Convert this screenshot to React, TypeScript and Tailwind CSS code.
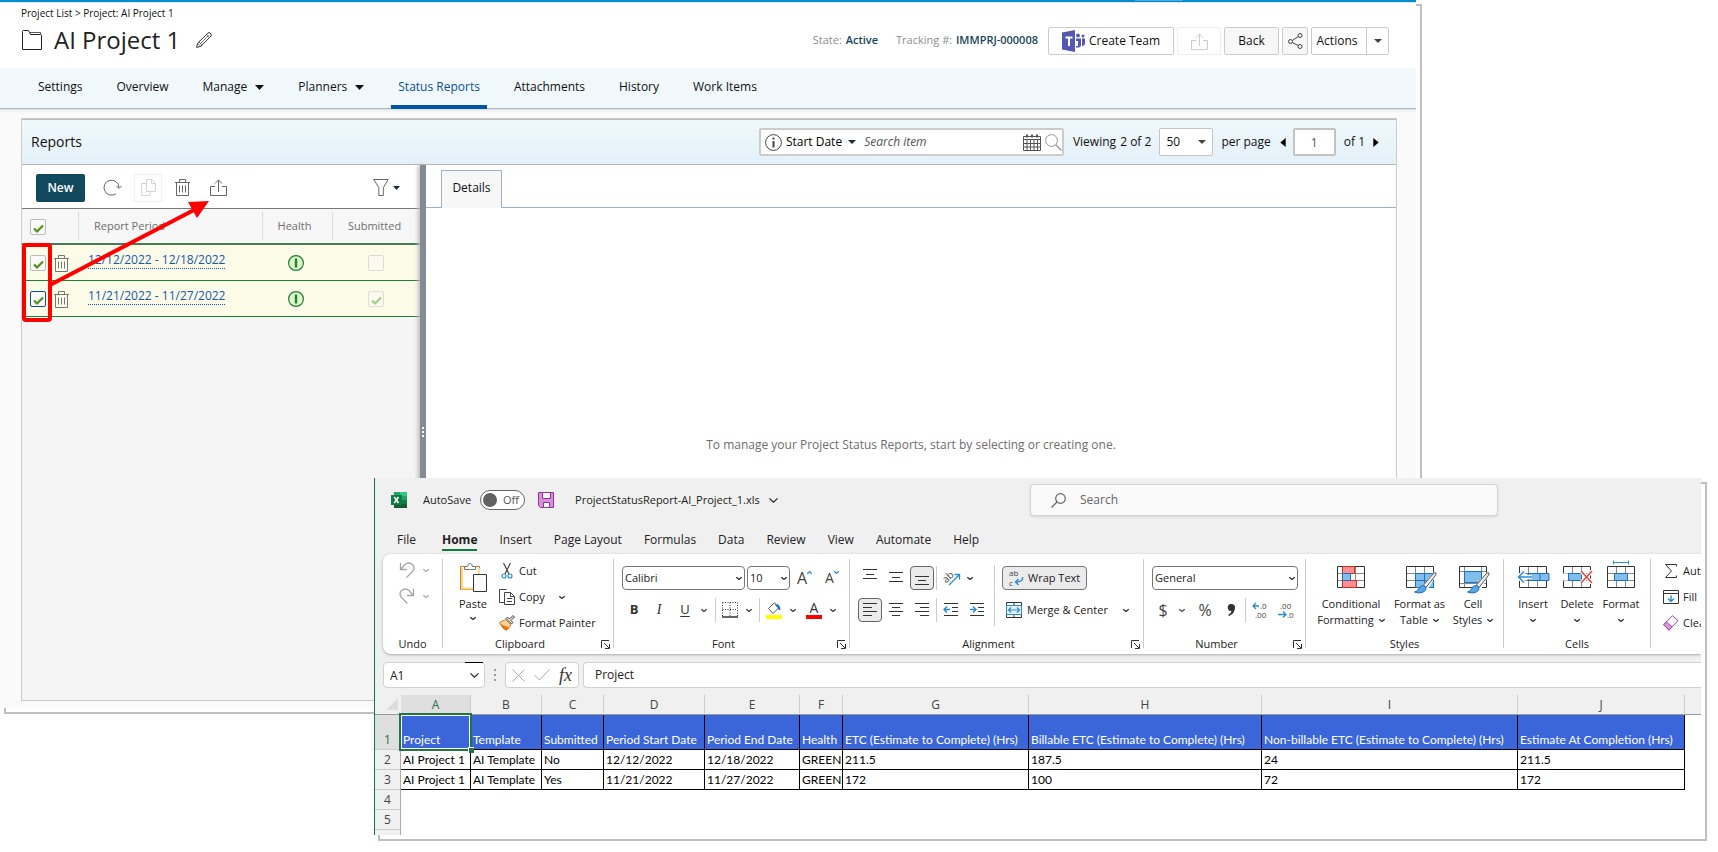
import type { ReactNode } from "react";

const NAV_ITEMS: { label: string; menu?: boolean; active?: boolean }[] = [
  { label: "Settings" },
  { label: "Overview" },
  { label: "Manage", menu: true },
  { label: "Planners", menu: true },
  { label: "Status Reports", active: true },
  { label: "Attachments" },
  { label: "History" },
  { label: "Work Items" },
];

const REPORTS = [
  { period: "12/12/2022 - 12/18/2022", submitted: false, focused: false },
  { period: "11/21/2022 - 11/27/2022", submitted: true, focused: true },
];

const RIBBON_TABS = [
  "File",
  "Home",
  "Insert",
  "Page Layout",
  "Formulas",
  "Data",
  "Review",
  "View",
  "Automate",
  "Help",
];

const SHEET_COLUMNS = [
  { letter: "A", width: "w-[70px]", title: "Project" },
  { letter: "B", width: "w-[71px]", title: "Template" },
  { letter: "C", width: "w-[62px]", title: "Submitted" },
  { letter: "D", width: "w-[101px]", title: "Period Start Date" },
  { letter: "E", width: "w-[95px]", title: "Period End Date" },
  { letter: "F", width: "w-[43px]", title: "Health" },
  { letter: "G", width: "w-[186px]", title: "ETC (Estimate to Complete) (Hrs)" },
  { letter: "H", width: "w-[233px]", title: "Billable ETC (Estimate to Complete) (Hrs)" },
  { letter: "I", width: "w-[256px]", title: "Non-billable ETC (Estimate to Complete) (Hrs)" },
  { letter: "J", width: "w-[167px]", title: "Estimate At Completion (Hrs)" },
];

const SHEET_ROWS = [
  ["AI Project 1", "AI Template", "No", "12/12/2022", "12/18/2022", "GREEN", "211.5", "187.5", "24", "211.5"],
  ["AI Project 1", "AI Template", "Yes", "11/21/2022", "11/27/2022", "GREEN", "172", "100", "72", "172"],
];

export default function App() {
  return (
    <div className="relative min-h-screen overflow-hidden bg-white">
      <ProjectWindow />
      <ExcelWindow />
    </div>
  );
}

/* ---------- project window ---------- */

function ProjectWindow() {
  return (
    <div className="relative mr-[302px] font-['Open_Sans',sans-serif] text-xs text-[#111]">
      <div className="absolute top-1 -right-[6px] -bottom-[6px] left-1 border-2 border-[#bfbfbf]" />
      <div className="relative flex min-h-[708px] flex-col bg-white">
        <div className="flex h-[3px] justify-end border-b border-[#d5eaf4] bg-[#0a8bcb]">
          <span className="mr-[233px] h-px w-12 bg-[#4aa9d8]" />
        </div>
        <ProjectHeader />
        <nav className="flex h-[41px] gap-5 border-b border-[#a3bac6] bg-[#f0f8fc] pl-[31px]">
          {NAV_ITEMS.map((item) => (
            <a
              key={item.label}
              href="#"
              className={`-mb-px flex h-[41px] items-center border-b-4 px-[7px] pt-px ${
                item.active
                  ? "border-[#0055a6] font-medium text-[#0b4f9c]"
                  : "border-transparent"
              }`}
            >
              {item.label}
              {item.menu && <Caret className="ml-2 h-[5px] w-[9px]" />}
            </a>
          ))}
        </nav>
        <main className="flex flex-1 flex-col bg-[#fafafa] pt-[9px] pr-[19px] pb-[7px] pl-[21px] shadow-[inset_0_3px_3px_-2px_#d8d8d8]">
          <div className="flex flex-1 flex-col border border-[#ccc]">
            <ReportsBar />
            <div className="flex flex-1">
              <ReportList />
              <div className="flex w-[6px] flex-col items-center gap-[2px] bg-[#838b94] pt-[262px] shadow-[-2px_0_4px_#bbb]">
                <i className="size-[2px] bg-white" />
                <i className="size-[2px] bg-white" />
                <i className="size-[2px] bg-white" />
              </div>
              <section className="flex flex-1 flex-col bg-white">
                <div className="flex h-[43px] items-end">
                  <span className="h-px w-[15px] bg-[#9db0cb]" />
                  <button className="h-[38px] w-[61px] border border-b-0 border-[#9db0cb] bg-[#f7f7f7] pb-1 font-medium text-[#111]">
                    Details
                  </button>
                  <span className="h-px flex-1 bg-[#9db0cb]" />
                </div>
                <p className="pt-[229px] text-center text-[#6e6e6e]">
                  To manage your Project Status Reports, start by selecting or creating one.
                </p>
              </section>
            </div>
          </div>
        </main>
        <Annotation />
      </div>
    </div>
  );
}

function ProjectHeader() {
  return (
    <header className="flex h-[65px] justify-between pr-[27px] pl-[21px]">
      <div>
        <p className="pt-[2px] text-[10px] leading-4">
          <a href="#">Project List</a> &gt; <a href="#">Project: AI Project 1</a>
        </p>
        <div className="mt-[3px] flex h-8 items-center pl-px">
          <svg viewBox="0 0 20 20" className="size-5" fill="none" stroke="#222">
            <path d="M.5 19.500V1.500q0-1 1-1H6.500l2 4h10q1 0 1 1V19.500z" />
            <path d="M7 2.500h11.500V4.500" stroke="#555" />
          </svg>
          <h1 className="ml-3 text-2xl leading-8 text-[#222]">AI Project 1</h1>
          <button aria-label="Rename" className="ml-4">
            <svg viewBox="0 0 16 16" className="size-4" fill="none" stroke="#333">
              <path d="M.6 15.400l1-4.200L12 1q1-.8 2 0l1 1q.8 1 0 2L4.800 14.400z" />
              <path d="M10.500 2.500l3 3M3 10l3 3M4.500 11.500l8-8M1.600 11.200l3.200 3.200" strokeWidth=".7" />
            </svg>
          </button>
        </div>
      </div>
      <div className="flex h-full items-center gap-[3px] pt-[11px] pl-3">
        <p className="mr-[7px] pb-px text-[11px] text-[#8a8f94]">
          State: <span className="ml-px font-semibold text-[#18455a]">Active</span>
          <span className="ml-[18px]">Tracking #:</span>{" "}
          <span className="ml-px font-semibold text-[#18455a]">IMMPRJ-000008</span>
        </p>
        <button className="flex h-7 w-[126px] items-center rounded-xs border border-[#ccc] pl-[13px]">
          <svg viewBox="0 0 23 22" className="mr-1 h-[22px] w-[23px]">
            <path fill="#5558af" d="M0 2.500L13 0v22L0 19.500z" />
            <path fill="#fff" d="M3.500 6.500h7v2H8v7.500H6V8.500H3.500z" />
            <g fill="#5558af">
              <circle cx="16" cy="5.500" r="1.900" />
              <circle cx="21" cy="6" r="1.500" />
              <path d="M14 8.500h5V15q0 3-5 2.500V16h2v-5h-2zM20 8.500h3V13q0 3-3 3z" />
            </g>
          </svg>
          <span>Create Team</span>
        </button>
        <button disabled aria-label="Export" className="flex h-7 w-11 items-center justify-center rounded-xs border border-[#eee] text-[#ccc]">
          <UploadIcon />
        </button>
        <button className="h-7 w-[55px] rounded-xs border border-[#ccc] bg-[#f7f7f7]">Back</button>
        <button aria-label="Share" className="flex h-7 w-[26px] items-center justify-center rounded-xs border border-[#ccc] bg-[#f7f7f7]">
          <svg viewBox="0 0 15 16" className="h-4 w-[15px]" fill="none" stroke="#444">
            <circle cx="2.500" cy="8.500" r="2" />
            <circle cx="12" cy="2.500" r="2" />
            <circle cx="12" cy="13.500" r="2" />
            <path d="M4.300 7.500L10.300 3.500M4.300 9.500l6 3" />
          </svg>
        </button>
        <div className="flex h-7 rounded-xs border border-[#ccc]">
          <button className="w-[55px] border-r border-[#ccc] pr-1">Actions</button>
          <button aria-label="More actions" className="flex w-[21px] items-center justify-center">
            <Caret className="h-1 w-2 text-[#444]" />
          </button>
        </div>
      </div>
    </header>
  );
}

function ReportsBar() {
  return (
    <div className="flex h-[46px] items-center justify-between border-y border-t-[#bbb] border-b-[#b5b5b5] bg-linear-to-b from-[#f0f8fc] to-[#e3f1f8] pr-[17px] pl-[9px]">
      <h2 className="text-sm font-medium text-[#111]">Reports</h2>
      <div className="flex items-center">
        <div className="flex h-7 w-[305px] items-center rounded-xs border-2 border-[#ccc] bg-white pl-1">
          <svg viewBox="0 0 17 17" className="size-[17px]" fill="none" stroke="#444">
            <circle cx="8.500" cy="8.500" r="7.900" />
            <path d="M8.500 7v6.500M8.500 3.500v2" strokeWidth="2" />
          </svg>
          <button className="ml-1 flex items-center font-medium text-black">
            Start Date <Caret className="ml-[6px] h-1 w-2 text-[#1c2b3a]" />
          </button>
          <input
            aria-label="Search item"
            placeholder="Search item"
            className="ml-2 w-0 flex-1 italic outline-none placeholder:text-[#555]"
          />
          <svg viewBox="0 0 18 17" className="h-[17px] w-[18px]" fill="none" stroke="#555">
            <path d="M.5 2.500h17v14H.5zM.5 5.500h17M.5 9.500h17M.5 13h17M4 5.500v11M7.500 5.500v11M11 5.500v11M14.500 5.500v11" />
            <path d="M4 .5v3M9 .5v3M14 .5v3" strokeWidth="2" />
          </svg>
          <svg viewBox="0 0 17 17" className="ml-1 size-[17px]" fill="none" stroke="#999">
            <circle cx="6.500" cy="6.500" r="5.900" />
            <path d="M10.800 10.800l5.700 5.700" strokeWidth="1.400" />
          </svg>
        </div>
        <p className="ml-[9px]">
          Viewing <span className="ml-px font-medium">2 of 2</span>
        </p>
        <div className="relative ml-2">
          <select aria-label="Reports per page" className="h-7 w-[54px] appearance-none rounded-xs border border-[#c4c4c4] bg-white pl-[6px]">
            <option>50</option>
          </select>
          <Caret className="pointer-events-none absolute top-3 right-[7px] h-1 w-2 text-[#444]" />
        </div>
        <span className="ml-2">per page</span>
        <button aria-label="Previous page" className="ml-[9px]">
          <svg viewBox="0 0 6 10" className="h-[9px] w-[6px]">
            <path d="M6 0v10L0 5z" />
          </svg>
        </button>
        <input
          aria-label="Page"
          defaultValue="1"
          className="ml-[7px] h-7 w-[43px] rounded-xs border-2 border-[#c4c4c4] bg-white text-center text-[#555]"
        />
        <span className="ml-2">of 1</span>
        <button aria-label="Next page" className="ml-2">
          <svg viewBox="0 0 6 10" className="h-[9px] w-[6px]">
            <path d="M0 0v10l6-5z" />
          </svg>
        </button>
      </div>
    </div>
  );
}

function ReportList() {
  return (
    <section className="w-[398px] bg-[#f5f5f5]">
      <div className="flex h-[44px] items-center border-b border-[#777] bg-white pt-[2px] pr-5 pl-[14px] text-[#666]">
        <button className="h-7 w-[49px] rounded-xs bg-[#11495f] font-semibold text-white">New</button>
        <button aria-label="Refresh" className="ml-[18px]">
          <svg viewBox="0 0 19 17" className="h-[17px] w-[19px]" fill="none" stroke="currentColor">
            <path d="M16 8.500a7.500 7.500 0 1 0-3.200 6.300M13.500 7l2.500 2.500L18.500 7" />
          </svg>
        </button>
        <button disabled aria-label="Copy" className="ml-3 flex size-7 items-center justify-center border border-[#eee] text-[#d5d5d5]">
          <svg viewBox="0 0 15 17" className="h-[17px] w-[15px]" fill="none" stroke="currentColor">
            <path d="M5.500.5h5l4 4v8h-9zM10.500.5v4h4M5.500 4.500h-5v12h8.500v-4" />
          </svg>
        </button>
        <button aria-label="Delete" className="ml-[13px]">
          <TrashIcon />
        </button>
        <button aria-label="Export" className="ml-5">
          <UploadIcon />
        </button>
        <button aria-label="Filter" className="ml-auto flex items-center">
          <svg viewBox="0 0 16 17" className="h-[17px] w-4" fill="none" stroke="currentColor">
            <path d="M.7.5h14.600l-5 8v8h-4.500v-8z" />
          </svg>
          <Caret className="ml-1 h-1 w-[7px] text-[#1c2b3a]" />
        </button>
      </div>
      <table className="w-full table-fixed border-separate border-spacing-0">
        <thead>
          <tr className="h-[36px] bg-[#f7f7f7] text-[11px] text-[#6e6e6e]">
            <th className="w-14 border-b-2 border-[#4a7a55] pl-2 text-left">
              <Tick label="Select all reports" checked className="mt-[2px] border-[#bbb]" />
            </th>
            <HeadCell width="w-[184px]" text="Report Period" align="pl-[15px] text-left" />
            <HeadCell width="w-[70px]" text="Health" align="pr-[6px] text-center" />
            <HeadCell width="" text="Submitted" align="pr-1 text-center" />
          </tr>
        </thead>
        <tbody>
          {REPORTS.map((report) => (
            <tr key={report.period} className="h-9 bg-[#fcfbe8]">
              <td className="border-b border-[#1c8035] p-0 pl-2">
                <div className="flex items-center gap-2 pt-px">
                  <Tick
                    label={`Select ${report.period}`}
                    checked
                    className={report.focused ? "border-[#0b4f9c]" : "border-[#bbb]"}
                  />
                  <button aria-label="Delete report" className="text-[#777]">
                    <TrashIcon />
                  </button>
                </div>
              </td>
              <td className="border-b border-[#1c8035] pl-[10px] align-top leading-4">
                <a href="#" className="mt-[7px] inline-block border-b border-dotted border-[#1257b5] text-[#1257b5]">
                  {report.period}
                </a>
              </td>
              <td className="border-b border-[#1c8035] p-0 pr-[3px]">
                <svg viewBox="0 0 16 16" className="mx-auto size-4" role="img" aria-label="Green">
                  <circle cx="8" cy="8" r="7.400" fill="#dff5c8" stroke="#1c8035" strokeWidth="1.200" />
                  <path d="M8 3.500v9" stroke="#1c8035" strokeWidth="2.400" />
                </svg>
              </td>
              <td className="border-b border-[#1c8035] pl-[36px]">
                <Tick label="Submitted" checked={report.submitted} disabled className="mt-px border-[#bbb]" />
              </td>
            </tr>
          ))}
        </tbody>
      </table>
    </section>
  );
}

function HeadCell({ width, text, align }: { width: string; text: string; align: string }) {
  return (
    <th className={`${width} border-b-2 border-[#4a7a55] p-0 font-normal`}>
      <div className={`h-7 border-l border-[#ddd] leading-7 ${align}`}>{text}</div>
    </th>
  );
}

function Tick({
  label,
  checked,
  disabled,
  className,
}: {
  label: string;
  checked?: boolean;
  disabled?: boolean;
  className: string;
}) {
  return (
    <span className={`relative block size-4 ${disabled ? "opacity-45" : ""}`}>
      <input
        type="checkbox"
        aria-label={label}
        defaultChecked={checked}
        disabled={disabled}
        className={`peer block size-4 appearance-none rounded-xs border bg-[#fafafa] ${className}`}
      />
      <svg
        viewBox="0 0 16 16"
        className="pointer-events-none absolute inset-0 hidden size-4 peer-checked:block"
        fill="none"
        stroke="#4c9212"
        strokeWidth="2.200"
      >
        <path d="M4 9.500l3 3L13 6.500" />
      </svg>
    </span>
  );
}

/* red call-out drawn over the selected rows, pointing at the export button */
function Annotation() {
  return (
    <svg viewBox="0 0 240 140" className="pointer-events-none absolute top-[190px] left-0 h-[140px] w-[240px]">
      <rect x="24" y="55" width="26" height="75" rx="2" fill="none" stroke="#f00" strokeWidth="4" />
      <path d="M50 95L194 20" stroke="#f00" strokeWidth="4" />
      <path d="M209 11l-21 1 9 16z" fill="#f00" />
    </svg>
  );
}

function Caret({ className }: { className: string }) {
  return (
    <svg viewBox="0 0 8 4" preserveAspectRatio="none" fill="currentColor" className={className}>
      <path d="M0 0h8L4 4z" />
    </svg>
  );
}

function UploadIcon() {
  return (
    <svg viewBox="0 0 17 17" className="size-[17px]" fill="none" stroke="currentColor">
      <path d="M5 7.500H.5v9h16v-9H12M8.500 13V1M5 4.500L8.500 1 12 4.500" />
    </svg>
  );
}

function TrashIcon() {
  return (
    <svg viewBox="0 0 15 17" className="h-[17px] w-[15px]" fill="none" stroke="currentColor">
      <path d="M0 3.500h15M4.500 3.500v-3h6v3M1.500 3.500v13h12v-13M4.500 6.500v7M7.500 6.500v7M10.500 6.500v7" />
    </svg>
  );
}

/* ---------- spreadsheet window ---------- */

function ExcelWindow() {
  return (
    <div className="absolute top-[478px] right-[17px] left-[374px] font-['Open_Sans',sans-serif] text-[11px] text-[#222]">
      <div className="absolute top-1 -right-[6px] -bottom-[6px] left-1 border-2 border-[#bfbfbf]" />
      <div className="relative overflow-hidden border-l border-[#107c41] bg-[#f0f0f0]">
        <TitleBar />
        <nav className="flex gap-[22px] pt-2 pb-[3px] pl-[22px] text-xs">
          {RIBBON_TABS.map((tab) => (
            <button
              key={tab}
              className={`border-b-2 leading-[19px] ${
                tab === "Home" ? "ml-1 border-[#107c41] font-bold" : "border-transparent"
              }`}
            >
              {tab}
            </button>
          ))}
        </nav>
        <Ribbon />
        <FormulaBar />
        <Sheet />
      </div>
    </div>
  );
}

function TitleBar() {
  return (
    <div className="flex h-11 items-center pl-4">
      <svg viewBox="0 0 16 16" className="size-4">
        <path fill="#21a366" d="M3 0h7v4H3z" />
        <path fill="#33c481" d="M9 0h7v4H9z" />
        <path fill="#107c41" d="M3 4h7v4H3z" />
        <path fill="#21a366" d="M9 4h7v4H9z" />
        <path fill="#185c37" d="M3 8h13v8H3z" />
        <path fill="#107c41" d="M9 8h7v4H9zM0 3h11v10H0z" />
        <path stroke="#fff" strokeWidth="1.500" d="M3.300 5l4.200 6M7.500 5l-4.200 6" />
      </svg>
      <label className="ml-4 flex items-center gap-[9px]">
        AutoSave
        <span className="flex h-5 w-[45px] items-center gap-[6px] rounded-full border border-[#666] bg-white pl-[2px] text-[#555]">
          <input type="checkbox" role="switch" className="size-[14px] appearance-none rounded-full bg-[#616161]" />
          Off
        </span>
      </label>
      <button aria-label="Save" className="ml-[13px]">
        <svg viewBox="0 0 16 16" className="size-4" fill="#d68fd9" stroke="#9a2fa0">
          <path d="M.5.5h15v15h-13l-2-2z" />
          <path fill="#fff" d="M4.500.5h8v6h-8zM5.500 10.500h6v5h-6z" />
        </svg>
      </button>
      <button className="ml-[21px] flex items-center gap-[9px]">
        ProjectStatusReport-AI_Project_1.xls
        <Chevron className="h-[5px] w-[9px]" />
      </button>
      <label className="mr-[203px] ml-auto flex h-8 w-[468px] items-center gap-[14px] rounded-sm border border-[#d5d5d5] bg-[#fafafa] pl-5 text-[#666] shadow-sm">
        <svg viewBox="0 0 15 15" className="size-[15px]" fill="none" stroke="#666" strokeWidth="1.200">
          <circle cx="9.500" cy="5.500" r="4.800" />
          <path d="M6 9L.5 14.500" />
        </svg>
        <input type="search" aria-label="Search" placeholder="Search" className="flex-1 text-xs outline-none placeholder:text-[#666]" />
      </label>
    </div>
  );
}

function Ribbon() {
  return (
    <div className="ml-2 flex h-[100px] overflow-hidden rounded-l-lg bg-white shadow-[0_1px_3px_#aaa]">
      <Group width="w-[59px]" label="Undo">
        <div className="flex flex-col gap-[10px] pt-2 pl-4 text-[#a5a5a5]">
          <button aria-label="Undo" className="flex items-center gap-2">
            <svg viewBox="0 0 16 16" className="size-4" fill="none" stroke="currentColor" strokeWidth="1.300">
              <path d="M1.500 1v6.500H8M1.800 7.200L6 2.500q4-3 7.500 0 3 3.500 0 7L7.500 15.500" />
            </svg>
            <Chevron className="h-[3px] w-[6px]" />
          </button>
          <button aria-label="Redo" className="flex items-center gap-2">
            <svg viewBox="0 0 16 16" className="size-4" fill="none" stroke="currentColor" strokeWidth="1.300">
              <path d="M14.500 1v6.500H8M14.200 7.200L10 2.500q-4-3-7.500 0-3 3.500 0 7l6 6" />
            </svg>
            <Chevron className="h-[3px] w-[6px]" />
          </button>
        </div>
      </Group>
      <Group width="w-[170px]" label="Clipboard" launcher>
        <div className="flex pl-[15px]">
          <button className="flex w-[30px] flex-col items-center pt-2">
            <svg viewBox="0 0 28 31" className="h-[31px] w-7" fill="none">
              <path d="M1.500 4.500h19v23h-19z" fill="#fff" stroke="#e07b16" />
              <path d="M3 6v20.500h17V6" stroke="#fbd990" strokeWidth="2" />
              <path d="M5.500 7.500v-3h3q.5-3 2.500-3t2.500 3h3v3z" fill="#fff" stroke="#777" />
              <path d="M14.500 12.500h13v17h-13z" fill="#fafafa" stroke="#333" />
            </svg>
            <span className="mt-[3px] leading-4">Paste</span>
            <Chevron className="mt-[5px] h-[3px] w-[6px]" />
          </button>
          <div className="ml-[11px] pt-1">
            <button className="flex h-[26px] items-center gap-1">
              <svg viewBox="0 0 16 16" className="size-4" fill="none" stroke="#444" strokeWidth="1.200">
                <path d="M4.500 0l5.500 11M11.500 0L6 11" />
                <circle cx="5" cy="13" r="2" stroke="#2a8dd4" />
                <circle cx="11" cy="13" r="2" stroke="#2a8dd4" />
              </svg>
              Cut
            </button>
            <button className="flex h-[26px] items-center gap-1">
              <svg viewBox="0 0 16 16" className="size-4" fill="none" stroke="#444">
                <path d="M5.500 13.500h-5V.5h7M5.500 3.500h6l4 4v8h-10zM11.500 3.500v4h4M8 9.500h5M8 12.500h5" />
              </svg>
              Copy
              <Chevron className="ml-[10px] h-[3px] w-[6px]" />
            </button>
            <button className="flex h-[26px] items-center gap-1 whitespace-nowrap">
              <svg viewBox="0 0 16 16" className="size-4" fill="none">
                <path d="M.5 7.500l6-3 5.500 5.500-4 5q-4 0-7.500-7.500z" fill="#fbd3a0" stroke="#e07b16" />
                <path d="M1.500 9l9 3.500-2.500 3q-4-.5-6.500-6.500z" fill="#e07b16" />
                <path d="M7 3.500l5.500 5.500 1.500-1.500-2-2L15.500 2 14 .5 10.500 4l-2-2z" fill="#ddd" stroke="#444" />
              </svg>
              Format Painter
            </button>
          </div>
        </div>
      </Group>
      <FontGroup />
      <AlignmentGroup />
      <NumberGroup />
      <Group width="w-[197px]" label="Styles">
        <div className="flex pt-3">
          <BigButton width="w-[90px]" lines={["Conditional", "Formatting"]}>
            <GridArt />
            <path d="M5.500.5h12v7h-12zM5.500 14.500h14v7h-14z" fill="#ff8f8f" stroke="#d92b1f" />
            <path d="M5.500 7.500h8v7h-8z" fill="#83bdec" stroke="#1a73c0" />
          </BigButton>
          <BigButton width="w-[47px]" lines={["Format as", "Table"]}>
            <GridArt />
            <path d="M9.500 7.500h18v14h-18z" fill="#83bdec" stroke="#1a73c0" />
            <path d="M9.500 14.500h18M18.500 7.500v14" stroke="#1a73c0" />
            <BrushArt />
          </BigButton>
          <BigButton width="w-[60px]" lines={["Cell", "Styles"]}>
            <path d="M.5 5.500h27M.5 17.500h27M5.500.5v21M22.500.5v21" stroke="#888" />
            <path d="M.5.5h27v21H.5z" stroke="#333" />
            <path d="M5.500 5.500h17v11h-17z" fill="#83bdec" stroke="#1a73c0" />
            <BrushArt />
          </BigButton>
        </div>
      </Group>
      <Group width="w-[146px]" label="Cells">
        <div className="flex pt-3 pl-[7px]">
          <BigButton width="w-11" lines={["Insert"]}>
            <GridArt />
            <path d="M9 7.500h21v7H9z" fill="#83bdec" stroke="#1a73c0" />
            <path d="M21 7.500v7" stroke="#1a73c0" />
            <path d="M13 11H0M5 5.500L-.5 11 5 16.500" stroke="#fff" strokeWidth="4" />
            <path d="M13 11H0M5 5.500L-.5 11 5 16.500" stroke="#2a8dd4" strokeWidth="1.500" />
          </BigButton>
          <BigButton width="w-11" lines={["Delete"]}>
            <GridArt />
            <path d="M-1 7.500h6v7h-6z" fill="#fff" />
            <path d="M5.500 7.500h13v7h-13z" fill="#83bdec" stroke="#1a73c0" />
            <path d="M18 5l11 12M29 5L18 17" stroke="#fff" strokeWidth="4" />
            <path d="M18 5l11 12M29 5L18 17" stroke="#e8433a" strokeWidth="1.500" />
          </BigButton>
          <BigButton width="w-11" lines={["Format"]}>
            <GridArt />
            <path d="M7.500 7.500h13v7h-13z" fill="#83bdec" stroke="#1a73c0" />
            <path d="M6.500-3.500h15M6.500-5.500v4M21.500-5.500v4" stroke="#2a8dd4" />
          </BigButton>
        </div>
      </Group>
      <div className="flex-1 overflow-hidden pt-1 pl-3 whitespace-nowrap">
        <button className="flex h-[26px] items-center gap-1">
          <svg viewBox="0 0 16 16" className="size-4 shrink-0" fill="none" stroke="#333">
            <path d="M13.500 3.500v-2h-11l6 6.500-6 6.500h11v-2" />
          </svg>
          AutoSum
        </button>
        <button className="flex h-[26px] items-center gap-1">
          <svg viewBox="0 0 16 16" className="size-4 shrink-0" fill="none" stroke="#333">
            <path d="M.5 1.500h15v13H.5zM.5 4.500h15" />
            <path d="M8 6.500v6M5 9.500l3 3 3-3" stroke="#2a8dd4" strokeWidth="1.400" />
          </svg>
          Fill
        </button>
        <button className="flex h-[26px] items-center gap-1">
          <svg viewBox="0 0 16 16" className="size-4 shrink-0" fill="#fff" stroke="#a33fae">
            <path d="M9.500.7l5.500 5-9 9.500-5.300-5.500z" />
            <path d="M3.500 7l5.500 5-3 3.200L.7 9.700z" fill="#d99ade" />
          </svg>
          Clear
        </button>
      </div>
    </div>
  );
}

function Group({
  width,
  label,
  launcher,
  children,
}: {
  width: string;
  label: string;
  launcher?: boolean;
  children: ReactNode;
}) {
  return (
    <>
      <section className={`${width} flex shrink-0 flex-col justify-between pb-[2px]`}>
        {children}
        <div className="flex items-center leading-4">
          <span className="flex-1 text-center">{label}</span>
          {launcher && (
            <button aria-label={`${label} settings`} className="mr-[3px] ml-1">
              <svg viewBox="0 0 9 9" className="size-[9px]" fill="none" stroke="#333">
                <path d="M.5 8V.5H8M3 3l5 5M8.500 4v4.500H4" />
              </svg>
            </button>
          )}
        </div>
      </section>
      <Divider className="mt-[5px] h-[89px]" />
    </>
  );
}

function FontGroup() {
  return (
    <Group width="w-[235px]" label="Font" launcher>
      <div className="flex flex-col gap-2 pt-3 pl-2">
        <div className="flex items-center">
          <Combo label="Font" value="Calibri" width="w-[123px]" />
          <Combo label="Font size" value="10" width="ml-[2px] w-[43px]" />
          <button aria-label="Increase font size" className="ml-[7px] flex w-[26px] items-start">
            <span className="text-base leading-5 text-[#444]">A</span>
            <Chevron className="mt-[3px] h-[3px] w-[5px] rotate-180 text-[#2a8dd4]" />
          </button>
          <button aria-label="Decrease font size" className="ml-[2px] flex items-start">
            <span className="text-sm leading-5 text-[#444]">A</span>
            <Chevron className="mt-[3px] h-[3px] w-[5px] text-[#2a8dd4]" />
          </button>
        </div>
        <div className="flex h-6 items-center text-[#333]">
          <button className="w-6 text-[13px] font-bold">B</button>
          <button className="w-[26px] font-['Liberation_Serif',serif] text-sm italic">I</button>
          <button className="w-[26px] text-[13px] underline underline-offset-2">U</button>
          <Chevron className="ml-[3px] h-[3px] w-[6px]" />
          <Divider className="ml-[8px] h-6" />
          <button aria-label="Borders" className="ml-[6px]">
            <svg viewBox="0 0 16 16" className="size-4" fill="none" stroke="#333">
              <path d="M.5.5h15v14M.5.5v14M8 .5v14M.5 7.500h15" strokeDasharray="1 1.500" />
              <path d="M0 15h16" strokeWidth="1.500" />
            </svg>
          </button>
          <Chevron className="ml-[8px] h-[3px] w-[6px]" />
          <Divider className="ml-[7px] h-6" />
          <button aria-label="Fill colour" className="ml-[6px]">
            <svg viewBox="0 0 16 17" className="h-[17px] w-4" fill="none">
              <path d="M8 1L2.500 6.500 7 11.500l5.500-5.500-3.500-4V.5" stroke="#555" />
              <path d="M10 3q3.500.5 3.500 5" stroke="#1a73c0" strokeWidth="1.800" />
              <path d="M0 13h16v4H0z" fill="#ff0" />
            </svg>
          </button>
          <Chevron className="ml-[8px] h-[3px] w-[6px]" />
          <button aria-label="Font colour" className="ml-[10px] flex w-4 flex-col items-center border-b-4 border-[#f00] text-sm leading-[14px]">
            A
          </button>
          <Chevron className="ml-[8px] h-[3px] w-[6px]" />
        </div>
      </div>
    </Group>
  );
}

function AlignmentGroup() {
  return (
    <Group width="w-[293px]" label="Alignment" launcher>
      <div className="flex pl-2">
        <div className="flex flex-col gap-2 pt-3">
          <div className="flex items-center gap-[2px]">
            <AlignButton label="Top align" d="M1 .5h14M4 5.500h8M1 9.500h14" />
            <AlignButton label="Middle align" d="M1 3.500h14M4 8.500h8M1 12.500h14" />
            <AlignButton label="Bottom align" d="M1 7.500h14M4 11.500h8M1 15.500h14" pressed />
            <Divider className="h-6" />
            <button aria-label="Orientation" className="mx-1">
              <svg viewBox="0 0 18 18" className="size-[18px] overflow-visible" fill="none">
                <text x="0" y="11" fontSize="10" fill="#444" transform="rotate(-42 6 9)">
                  ab
                </text>
                <path d="M6 16L16 6M11.500 5.500H16.500V10.500" stroke="#2a8dd4" strokeWidth="1.300" />
              </svg>
            </button>
            <Chevron className="h-[3px] w-[6px]" />
          </div>
          <div className="flex items-center gap-[2px]">
            <AlignButton label="Align left" d="M1 2.500h14M1 6.500h9M1 10.500h14M1 14.500h9" pressed />
            <AlignButton label="Center" d="M1 2.500h14M4 6.500h8M1 10.500h14M4 14.500h8" />
            <AlignButton label="Align right" d="M1 2.500h14M6 6.500h9M1 10.500h14M6 14.500h9" />
            <Divider className="h-6" />
            <AlignButton label="Decrease indent" d="M1 2.500h14M9 6.500h6M9 10.500h6M1 14.500h14" arrow="M7 8.500H1M4 5.500l-3 3 3 3" />
            <AlignButton label="Increase indent" d="M1 2.500h14M9 6.500h6M9 10.500h6M1 14.500h14" arrow="M1 8.500h6M4 5.500l3 3-3 3" />
          </div>
        </div>
        <Divider className="mt-[11px] ml-[5px] h-[61px]" />
        <div className="flex flex-col items-start gap-2 pt-3 pl-[7px] whitespace-nowrap">
          <button className="flex h-6 items-center gap-1 rounded-sm border border-[#777] bg-[#ebebeb] px-[6px]">
            <svg viewBox="0 0 15 20" className="h-5 w-[15px] overflow-visible" fill="none">
              <text x="0" y="8" fontSize="8" fill="#444">
                ab
              </text>
              <text x="0" y="18" fontSize="8" fill="#444">
                c
              </text>
              <path d="M13.500 9q1 5-7 5M9.500 11l-3 3 3 3" stroke="#2a8dd4" strokeWidth="1.400" />
            </svg>
            Wrap Text
          </button>
          <button className="flex h-6 items-center gap-[5px] pl-1">
            <svg viewBox="0 0 16 16" className="size-4" fill="none" stroke="#333">
              <path d="M.5.500h15v15H.500zM8 .500v3M8 12.500v3" />
              <path d="M.5 3.500h15v9H.500z" fill="#e3f1fc" stroke="#2a8dd4" />
              <path d="M2.500 8h11M5 5.500L2.500 8 5 10.500M11 5.500L13.500 8 11 10.500" stroke="#2a8dd4" strokeWidth="1.200" />
            </svg>
            Merge &amp; Center
            <Chevron className="ml-[10px] h-[3px] w-[6px]" />
          </button>
        </div>
      </div>
    </Group>
  );
}

function NumberGroup() {
  return (
    <Group width="w-[161px]" label="Number" launcher>
      <div className="flex flex-col gap-2 pt-3 pl-2">
        <Combo label="Number format" value="General" width="w-[146px]" />
        <div className="flex h-6 items-center text-[#444]">
          <button className="w-[22px] text-base">$</button>
          <Chevron className="ml-[5px] h-[3px] w-[6px]" />
          <button className="ml-[10px] w-5 text-base">%</button>
          <button aria-label="Comma style" className="ml-3">
            <svg viewBox="0 0 8 14" className="h-[14px] w-2">
              <path d="M4 1a3.500 3.500 0 0 1 4 4q0 5-6 8l-1-1q3.500-2 3.500-4A3.500 3.500 0 1 1 4 1z" fill="#333" />
            </svg>
          </button>
          <Divider className="ml-[10px] h-6" />
          <button aria-label="Increase decimal" className="ml-[6px]">
            <svg viewBox="0 0 17 20" className="h-5 w-[17px] overflow-visible" fill="#444">
              <text x="8" y="9" fontSize="8">
                .0
              </text>
              <text x="3" y="18" fontSize="8">
                .00
              </text>
              <path d="M7 6H1M4 3L1 6l3 3" fill="none" stroke="#2a8dd4" strokeWidth="1.300" />
            </svg>
          </button>
          <button aria-label="Decrease decimal" className="ml-[9px]">
            <svg viewBox="0 0 17 20" className="h-5 w-[17px] overflow-visible" fill="#444">
              <text x="2" y="9" fontSize="8">
                .00
              </text>
              <text x="9" y="18" fontSize="8">
                .0
              </text>
              <path d="M0 14.500h8M5 11.500l3 3-3 3" fill="none" stroke="#2a8dd4" strokeWidth="1.300" />
            </svg>
          </button>
        </div>
      </div>
    </Group>
  );
}

function AlignButton({
  label,
  d,
  arrow,
  pressed,
}: {
  label: string;
  d: string;
  arrow?: string;
  pressed?: boolean;
}) {
  return (
    <button
      aria-label={label}
      className={`flex size-6 items-center justify-center rounded-sm border ${
        pressed ? "border-[#666] bg-[#ebebeb]" : "border-transparent"
      }`}
    >
      <svg viewBox="0 0 16 18" className="h-[18px] w-4 shrink-0" fill="none" stroke="#333">
        <path d={d} />
        {arrow && <path d={arrow} stroke="#2a8dd4" strokeWidth="1.400" />}
      </svg>
    </button>
  );
}

function BigButton({ width, lines, children }: { width: string; lines: string[]; children: ReactNode }) {
  return (
    <button className={`${width} flex shrink-0 flex-col items-center whitespace-nowrap`}>
      <svg viewBox="0 0 28 22" className="h-[22px] w-7 overflow-visible" fill="none">
        {children}
      </svg>
      <span className="mt-2 leading-4">{lines[0]}</span>
      <span className="flex h-4 items-center gap-[5px]">
        {lines[1]}
        <Chevron className="h-[3px] w-[6px]" />
      </span>
    </button>
  );
}

function GridArt() {
  return (
    <>
      <path d="M.5 7.500h27M.5 14.500h27M9.500.5v21M18.500.5v21" stroke="#888" />
      <path d="M.5.5h27v21H.5z" stroke="#333" />
    </>
  );
}

function BrushArt() {
  return (
    <>
      <path d="M30 6L18 20l-9 6h8l4-4z" stroke="#fff" strokeWidth="3" />
      <path d="M30 7q-1-1-3 1L17.500 19l2.500 2.500L29 10q1.500-2 1-3z" fill="#eee" stroke="#555" />
      <path d="M17.500 19.500q-4 0-5 3.500-1 2.500-4 3 5 2 9 0 3-2 2.500-4.500z" fill="#5aa5e4" stroke="#1a73c0" />
    </>
  );
}

function Combo({ label, value, width }: { label: string; value: string; width: string }) {
  return (
    <div className={`relative ${width}`}>
      <select aria-label={label} className="block h-6 w-full appearance-none rounded-sm border border-[#777] bg-white pl-[2px]">
        <option>{value}</option>
      </select>
      <Chevron className="pointer-events-none absolute top-[11px] right-[3px] h-[3px] w-[6px]" />
    </div>
  );
}

function Chevron({ className }: { className: string }) {
  return (
    <svg
      viewBox="0 0 10 6"
      preserveAspectRatio="none"
      fill="none"
      stroke="currentColor"
      className={`shrink-0 overflow-visible ${className}`}
    >
      <path d="M.5.5L5 5 9.500.5" vectorEffect="non-scaling-stroke" strokeWidth="1.200" />
    </svg>
  );
}

function Divider({ className }: { className: string }) {
  return <span className={`w-px shrink-0 bg-[#ccc] ${className}`} />;
}

function FormulaBar() {
  return (
    <div className="mt-2 flex h-[26px] pl-2">
      <div className="relative w-[102px]">
        <input
          aria-label="Name box"
          defaultValue="A1"
          className="h-full w-full rounded-sm border border-[#d0d0d0] bg-white pl-[6px] text-xs"
        />
        <span className="absolute top-0 right-[2px] h-px w-[18px] bg-black" />
        <Chevron className="pointer-events-none absolute top-[11px] right-[6px] h-[5px] w-[9px]" />
      </div>
      <div className="flex w-5 flex-col items-center justify-center gap-[3px]">
        <i className="size-[2px] bg-[#999]" />
        <i className="size-[2px] bg-[#999]" />
        <i className="size-[2px] bg-[#999]" />
      </div>
      <div className="flex w-[74px] items-center gap-[9px] rounded-sm border border-[#d0d0d0] bg-white pl-[6px] text-[#aaa]">
        <svg viewBox="0 0 13 13" className="size-[13px]" fill="none" stroke="currentColor">
          <path d="M.5.5l12 12M12.500.5l-12 12" />
        </svg>
        <svg viewBox="0 0 16 12" className="h-3 w-4" fill="none" stroke="currentColor">
          <path d="M.5 6l5 5L15.500.5" />
        </svg>
        <button className="font-['Liberation_Serif',serif] text-lg leading-5 text-[#333] italic">fx</button>
      </div>
      <input
        aria-label="Formula"
        defaultValue="Project"
        className="ml-1 flex-1 rounded-l-sm border border-r-0 border-[#d0d0d0] bg-white pl-[11px] text-xs"
      />
    </div>
  );
}

function Sheet() {
  return (
    <table className="mt-[7px] w-full table-fixed border-separate border-spacing-0 bg-white font-['Lato',sans-serif] text-xs text-black">
      <thead>
        <tr className="h-5 bg-[#f0f0f0] text-[#444]">
          <th className="w-[26px] border-b border-[#999] p-0">
            <svg viewBox="0 0 12 12" className="mb-px ml-[11px] size-3">
              <path d="M12 0v12H0z" fill="#dcdcdc" />
            </svg>
          </th>
          {SHEET_COLUMNS.map((col) => (
            <th
              key={col.letter}
              className={`${col.width} border-r border-b border-r-[#ccc] border-b-[#999] p-0 font-['Open_Sans',sans-serif] font-normal ${
                col.letter === "A" ? "bg-[#dfdfdf] text-[#217346]" : ""
              }`}
            >
              {col.letter}
            </th>
          ))}
          <th className="border-b border-[#999]" />
        </tr>
      </thead>
      <tbody>
        <tr className="h-[35px] text-white">
          <RowHead n={1} />
          {SHEET_COLUMNS.map((col) => (
            <td
              key={col.letter}
              className="relative overflow-visible border-r border-b border-black bg-[#3a66d9] p-0 pb-px pl-[2px] align-bottom whitespace-nowrap"
            >
              {col.title}
              {col.letter === "A" && (
                <>
                  <i className="absolute -inset-[2px] z-10 border-2 border-[#217346] shadow-[inset_0_0_0_1px_#fff]" />
                  <i className="absolute -right-1 -bottom-1 z-20 size-[6px] border-t border-l border-white bg-[#217346]" />
                </>
              )}
            </td>
          ))}
          <td />
        </tr>
        {SHEET_ROWS.map((row, i) => (
          <tr key={i} className="h-5">
            <RowHead n={i + 2} />
            {row.map((value, j) => (
              <td key={j} className="border-r border-b border-black p-0 pl-[2px] whitespace-nowrap">
                {value}
              </td>
            ))}
            <td />
          </tr>
        ))}
        {[4, 5].map((n) => (
          <tr key={n} className="h-5">
            <RowHead n={n} />
            <td colSpan={11} />
          </tr>
        ))}
        <tr className="h-[5px]">
          <td className="border-r border-[#aaa] bg-[#f0f0f0] p-0" />
          <td colSpan={11} className="p-0" />
        </tr>
      </tbody>
    </table>
  );
}

function RowHead({ n }: { n: number }) {
  return (
    <th
      className={`border-r border-b border-r-[#aaa] border-b-[#ccc] p-0 align-bottom font-['Open_Sans',sans-serif] leading-[18px] font-normal ${
        n === 1 ? "bg-[#dfdfdf] text-[#217346]" : "bg-[#f0f0f0] text-[#444]"
      }`}
    >
      {n}
    </th>
  );
}
